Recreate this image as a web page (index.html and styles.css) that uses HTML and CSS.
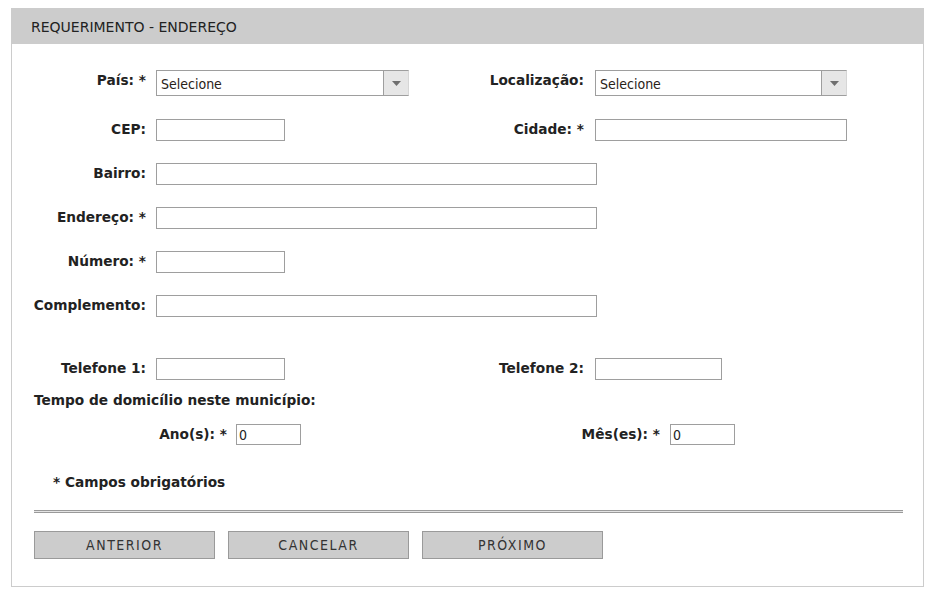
FILE: index.html
```html
<!DOCTYPE html>
<html lang="pt-BR">
<head>
<meta charset="utf-8">
<title>Requerimento - Endereço</title>
<link rel="stylesheet" href="styles.css">
</head>
<body>
<div class="panel">
  <div class="panel-head">REQUERIMENTO - ENDEREÇO</div>
  <div class="panel-body">
    <div class="row row-select">
      <div class="group group-left">
        <label class="lbl">País: *</label>
        <div class="select w253"><span class="select-text">Selecione</span><span class="select-arrow"><svg width="9" height="5" viewBox="0 0 9 5"><path d="M0 0h9L4.5 5z" fill="#6f6f6f"/></svg></span></div>
      </div>
      <div class="group">
        <label class="lbl lbl-r">Localização:</label>
        <div class="select w252"><span class="select-text">Selecione</span><span class="select-arrow"><svg width="9" height="5" viewBox="0 0 9 5"><path d="M0 0h9L4.5 5z" fill="#6f6f6f"/></svg></span></div>
      </div>
    </div>
    <div class="row">
      <div class="group group-left">
        <label class="lbl">CEP:</label>
        <input class="field w129" type="text">
      </div>
      <div class="group">
        <label class="lbl lbl-r">Cidade: *</label>
        <input class="field w252" type="text">
      </div>
    </div>
    <div class="row">
      <label class="lbl">Bairro:</label>
      <input class="field w441" type="text">
    </div>
    <div class="row">
      <label class="lbl">Endereço: *</label>
      <input class="field w441" type="text">
    </div>
    <div class="row">
      <label class="lbl">Número: *</label>
      <input class="field w129" type="text">
    </div>
    <div class="row">
      <label class="lbl">Complemento:</label>
      <input class="field w441" type="text">
    </div>
    <div class="row row-phone">
      <div class="group group-left">
        <label class="lbl">Telefone 1:</label>
        <input class="field w129" type="text">
      </div>
      <div class="group">
        <label class="lbl lbl-r">Telefone 2:</label>
        <input class="field w128" type="text">
      </div>
    </div>
    <div class="section-title">Tempo de domicílio neste município:</div>
    <div class="row row-time">
      <div class="group group-left">
        <label class="lbl lbl-ano">Ano(s): *</label>
        <input class="field field-small w65" type="text" value="0">
      </div>
      <div class="group">
        <label class="lbl lbl-mes">Mês(es): *</label>
        <input class="field field-small w65" type="text" value="0">
      </div>
    </div>
    <div class="note">* Campos obrigatórios</div>
    <div class="divider"></div>
    <div class="actions">
      <button class="btn" type="button">ANTERIOR</button>
      <button class="btn" type="button">CANCELAR</button>
      <button class="btn" type="button">PRÓXIMO</button>
    </div>
  </div>
</div>
</body>
</html>
```

FILE: styles.css
```css
* { box-sizing: border-box; }

html, body {
  margin: 0;
  padding: 0;
  background: #ffffff;
}

body {
  font-family: "DejaVu Sans", sans-serif;
  font-size: 14px;
  line-height: 17px;
  color: #222222;
}

.panel {
  margin: 8px 0 0 11px;
  width: 913px;
  border: 1px solid #cccccc;
  border-top: 0;
}

.panel-head {
  height: 36px;
  background: #cccccc;
  padding: 11px 0 0 19px;
  color: #222222;
  font-size: 14px;
}

.panel-body {
  padding: 26px 0 27px 0;
}

.row {
  display: flex;
  align-items: flex-start;
  margin-bottom: 22px;
}

.row-select { margin-bottom: 23px; }
.row-phone { margin-top: 41px; margin-bottom: 12px; }

.group {
  display: flex;
  align-items: flex-start;
}

.group-left { width: 424px; }

.lbl {
  width: 144px;
  padding: 2px 10px 0 0;
  text-align: right;
  font-weight: bold;
  font-size: 13.7px;
  white-space: nowrap;
}

.lbl-r {
  width: 159px;
  padding-right: 11px;
}

.lbl-ano {
  width: 224px;
  padding-right: 9px;
}

.lbl-mes {
  width: 234px;
  padding-right: 10px;
}

.field {
  height: 22px;
  border: 1px solid #9e9e9e;
  background: #ffffff;
  padding: 0 3px;
  font-family: "DejaVu Sans Condensed", "DejaVu Sans", sans-serif;
  font-size: 14px;
  color: #222222;
  margin: 0;
  outline: none;
}

.field-small {
  height: 21px;
  padding: 0 2px;
}

.w65 { width: 65px; }
.w128 { width: 127px; }
.w129 { width: 129px; }
.w252 { width: 252px; }
.w253 { width: 253px; }
.w441 { width: 441px; }

.select {
  display: flex;
  height: 26px;
  border: 1px solid #9e9e9e;
  border-right-color: #d6d6d6;
  background: #ffffff;
}

.select-text {
  flex: 1;
  padding: 5px 0 0 4px;
  font-family: "DejaVu Sans Condensed", "DejaVu Sans", sans-serif;
  color: #2a2218;
}

.select-arrow {
  width: 25px;
  background: #e6e6e6;
  border-left: 1px solid #9e9e9e;
  display: flex;
  align-items: center;
  justify-content: center;
}

.section-title {
  padding-left: 22px;
  font-weight: bold;
  font-size: 13.7px;
  margin-bottom: 15px;
}

.row-time { margin-bottom: 29px; }

.note {
  padding-left: 41px;
  font-weight: bold;
  font-size: 13.7px;
  margin-bottom: 19px;
}

.divider {
  margin: 0 20px 0 22px;
  height: 3px;
  border-top: 1px solid #9a9a9a;
  border-bottom: 1px solid #9a9a9a;
  background: #e4e4e4;
}

.actions {
  display: flex;
  gap: 13px;
  padding: 18px 0 0 22px;
}

.btn {
  width: 181px;
  height: 28px;
  background: #cccccc;
  border: 1px solid #9a9a9a;
  font-family: "DejaVu Sans Condensed", "DejaVu Sans", sans-serif;
  font-size: 14px;
  letter-spacing: 1.5px;
  color: #333333;
  padding: 0;
  margin: 0;
}
```
